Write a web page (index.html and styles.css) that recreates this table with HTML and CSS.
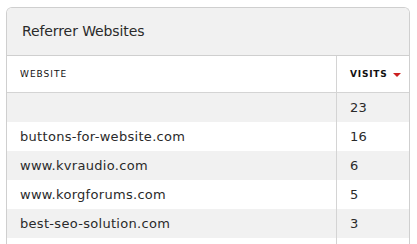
FILE: index.html
```html
<!DOCTYPE html>
<html>
<head>
<meta charset="utf-8">
<link rel="stylesheet" href="styles.css">
</head>
<body>
<div class="card">
  <div class="card-head">Referrer Websites</div>
  <table class="grid">
    <thead>
      <tr>
        <th class="col-site">Website</th>
        <th class="col-visits">Visits <span class="caret"></span></th>
      </tr>
    </thead>
    <tbody>
      <tr><td class="col-site"></td><td class="col-visits">23</td></tr>
      <tr><td class="col-site">buttons-for-website.com</td><td class="col-visits">16</td></tr>
      <tr><td class="col-site">www.kvraudio.com</td><td class="col-visits">6</td></tr>
      <tr><td class="col-site">www.korgforums.com</td><td class="col-visits">5</td></tr>
      <tr><td class="col-site">best-seo-solution.com</td><td class="col-visits">3</td></tr>
      <tr class="tail"><td class="col-site"></td><td class="col-visits"></td></tr>
    </tbody>
  </table>
</div>
</body>
</html>
```
FILE: styles.css
```css
html, body {
  margin: 0;
  padding: 0;
  background: #fff;
  overflow: hidden;
}
body {
  font-family: "DejaVu Sans", Verdana, sans-serif;
  color: #222;
}
.card {
  margin: 7px 0 0 6px;
  width: 402px;
  border: 1px solid #cfcfcf;
  border-bottom: none;
  border-radius: 6px 6px 0 0;
  overflow: hidden;
}
.card-head {
  height: 47px;
  line-height: 47px;
  padding-left: 15px;
  background: #f1f1f1;
  border-bottom: 1px solid #cfcfcf;
  font-size: 14px;
  letter-spacing: -0.1px;
  color: #2a2a2a;
}
.grid {
  width: 100%;
  border-collapse: collapse;
}
.grid th {
  height: 36px;
  padding: 0 0 0 13px;
  text-align: left;
  font-size: 9px;
  font-weight: normal;
  text-transform: uppercase;
  letter-spacing: 1px;
  border-bottom: 1px solid #d4d4d4;
  color: #111;
}
.grid th.col-visits {
  font-weight: bold;
  font-size: 9px;
  letter-spacing: 0.8px;
}
.col-visits {
  width: 59px;
  border-left: 1px solid #d4d4d4;
}
.grid td {
  height: 29px;
  padding: 0 0 0 13px;
  font-size: 13px;
  letter-spacing: 0.3px;
  color: #2a2a2a;
}
.grid tbody tr:nth-child(odd) td {
  background: #f1f1f1;
}
.grid tbody tr.tail td {
  height: 6px;
  background: #fff;
}
.caret {
  display: inline-block;
  width: 0;
  height: 0;
  margin-left: 1px;
  vertical-align: middle;
  border-left: 4px solid transparent;
  border-right: 4px solid transparent;
  border-top: 4px solid #cc1f1f;
}
```
